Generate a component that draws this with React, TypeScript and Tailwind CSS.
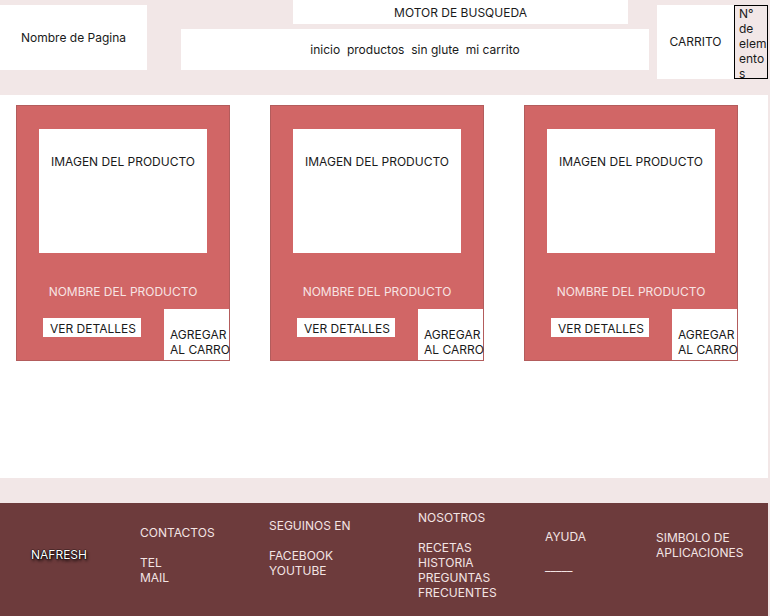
import React from 'react'

const font = { fontFamily: 'Inter, "Noto Sans", sans-serif' }

function ProductCard() {
  return (
    <div className="w-[214px] h-[256px] bg-[#d16666] border border-[#b35c5c] flex flex-col">
      {/* Image */}
      <div className="ml-[22px] mt-[23px] w-[168px] h-[124px] bg-white pl-[12px] pt-[25px] text-[12px] leading-[15px] text-[#1a1a1a]">
        IMAGEN DEL PRODUCTO
      </div>
      <p className="mt-[31px] text-center text-[12px] leading-[15px] text-[#f7e3e3]">NOMBRE DEL PRODUCTO</p>
      {/* Actions */}
      <div className="mt-[10px] flex-1 flex justify-between">
        <div className="ml-[26px] mt-[9px] w-[98px] h-[19px] bg-white pl-[7px] pt-[1px] text-[12px] leading-[19px] text-[#1a1a1a] whitespace-nowrap">
          VER DETALLES
        </div>
        <div className="w-[65px] bg-white pl-[6px] pt-[18px] text-[12px] leading-[15px] text-[#1a1a1a] whitespace-nowrap">
          AGREGAR
          <br />
          AL CARRO
        </div>
      </div>
    </div>
  )
}

export default function App() {
  return (
    <div className="w-[770px] h-[616px] bg-[#f2e7e7] overflow-hidden" style={font}>
      {/* Header */}
      <header className="h-[95px] flex items-start text-[12px] leading-[15px] text-[#1a1a1a]">
        <div className="mt-[5px] w-[147px] h-[65px] bg-white flex items-center justify-center">Nombre de Pagina</div>
        <div className="ml-[34px] w-[468px] flex flex-col">
          <div className="ml-[112px] w-[335px] h-[24px] bg-white flex items-center justify-center">MOTOR DE BUSQUEDA</div>
          <nav className="mt-[5px] h-[41px] bg-white flex items-center justify-center whitespace-pre">
            inicio  productos  sin glute  mi carrito
          </nav>
        </div>
        <div className="ml-[8px] mt-[5px] w-[77px] h-[74px] bg-white flex items-center justify-center pb-[2px]">CARRITO</div>
        <div className="mt-[5px] w-[34px] h-[74px] border border-black pl-[4px] overflow-hidden [overflow-wrap:anywhere]">
          N° de elementos
        </div>
      </header>

      {/* Products */}
      <main className="w-[768px] h-[383px] bg-white pt-[10px] pl-[16px] flex gap-[40px] items-start">
        <ProductCard />
        <ProductCard />
        <ProductCard />
      </main>

      {/* Footer */}
      <footer className="mt-[25px] w-[768px] h-[113px] bg-[#6d3b3c] flex items-start text-[12px] leading-[15px] text-[#f3e4e4]">
        <div className="w-[140px] pl-[31px] pt-[44px]">
          <span className="text-white [text-shadow:0_0_1px_#000,0_0_1px_#000,0_0_1px_#000,1px_2px_3px_#000]">NAFRESH</span>
        </div>
        <div className="w-[129px] pt-[22px]">
          CONTACTOS
          <br />
          <br />
          TEL
          <br />
          MAIL
        </div>
        <div className="w-[149px] pt-[15px]">
          SEGUINOS EN
          <br />
          <br />
          FACEBOOK
          <br />
          YOUTUBE
        </div>
        <div className="w-[127px] pt-[7px]">
          NOSOTROS
          <br />
          <br />
          RECETAS
          <br />
          HISTORIA
          <br />
          PREGUNTAS
          <br />
          FRECUENTES
        </div>
        <div className="w-[111px] pt-[26px]">
          AYUDA
          <br />
          <br />
          _____
        </div>
        <div className="pt-[27px]">
          SIMBOLO DE
          <br />
          APLICACIONES
        </div>
      </footer>
    </div>
  )
}
